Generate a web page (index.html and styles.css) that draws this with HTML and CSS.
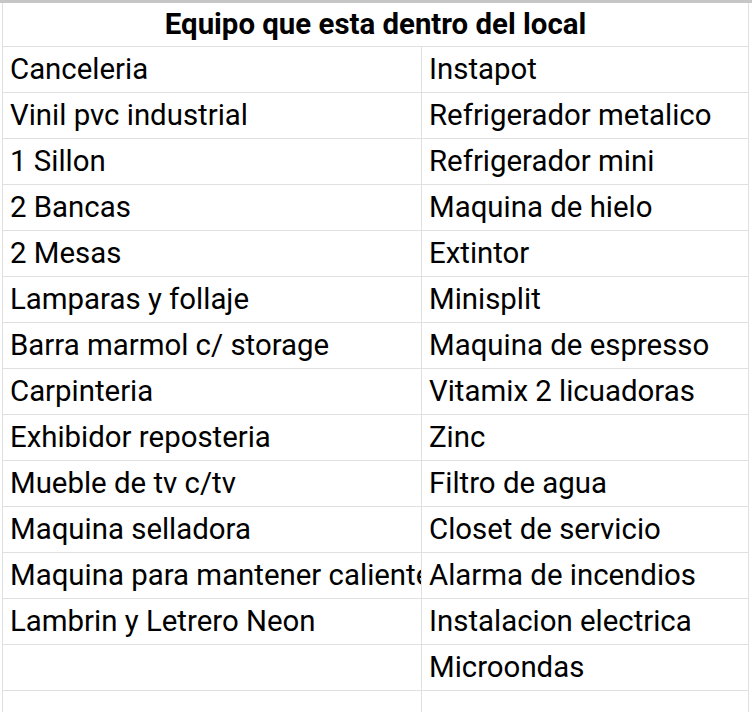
FILE: index.html
```html
<!DOCTYPE html>
<html lang="es">
<head>
<meta charset="utf-8">
<title>Equipo</title>
<link rel="stylesheet" href="styles.css">
</head>
<body>
<div class="sheet">
<table class="grid">
<colgroup><col class="c1"><col class="c2"></colgroup>
<thead>
<tr><th colspan="2">Equipo que esta dentro del local</th></tr>
</thead>
<tbody>
<tr><td>Canceleria</td><td>Instapot</td></tr>
<tr><td>Vinil pvc industrial</td><td>Refrigerador metalico</td></tr>
<tr><td>1 Sillon</td><td>Refrigerador mini</td></tr>
<tr><td>2 Bancas</td><td>Maquina de hielo</td></tr>
<tr><td>2 Mesas</td><td>Extintor</td></tr>
<tr><td>Lamparas y follaje</td><td>Minisplit</td></tr>
<tr><td>Barra marmol c/ storage</td><td>Maquina de espresso</td></tr>
<tr><td>Carpinteria</td><td>Vitamix 2 licuadoras</td></tr>
<tr><td>Exhibidor reposteria</td><td>Zinc</td></tr>
<tr><td>Mueble de tv c/tv</td><td>Filtro de agua</td></tr>
<tr><td>Maquina selladora</td><td>Closet de servicio</td></tr>
<tr><td>Maquina para mantener caliente</td><td>Alarma de incendios</td></tr>
<tr><td>Lambrin y Letrero Neon</td><td>Instalacion electrica</td></tr>
<tr><td></td><td>Microondas</td></tr>
<tr><td></td><td></td></tr>
</tbody>
</table>
</div>
</body>
</html>
```
FILE: styles.css
```css
html, body {
  margin: 0;
  padding: 0;
  background: #ffffff;
}
body {
  width: 752px;
  height: 712px;
  overflow: hidden;
  font-family: Roboto, "Liberation Sans", sans-serif;
  color: #000000;
}
.sheet {
  border-top: 3px solid #c6c6c6;
  padding-left: 2px;
}
.grid {
  border-collapse: collapse;
  table-layout: fixed;
  width: 746px;
}
.c1 { width: 419px; }
.c2 { width: 327px; }
.grid th,
.grid td {
  border: 1px solid #e0e0e0;
  height: 45px;
  padding: 0 7px;
  white-space: nowrap;
  overflow: hidden;
  font-size: 29.4px;
  line-height: 45px;
  vertical-align: middle;
  text-align: left;
}
.grid thead th {
  border-top: none;
  height: 43px;
  line-height: 43px;
  font-weight: 700;
  text-align: center;
}
```
